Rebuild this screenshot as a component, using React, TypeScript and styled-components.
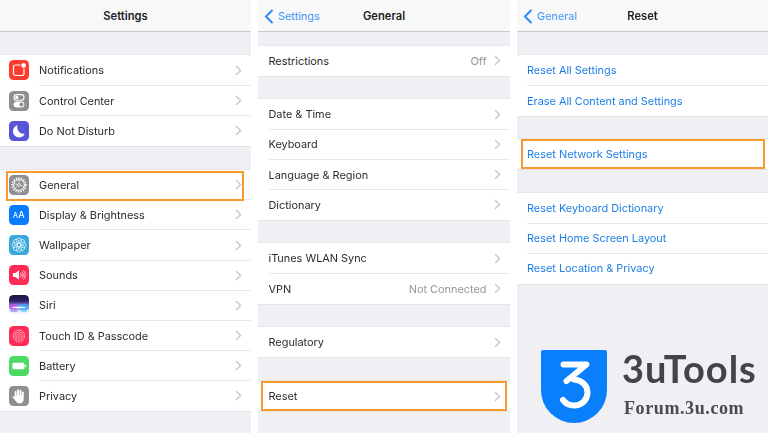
import React from 'react';
import styled, { createGlobalStyle } from 'styled-components';

const GlobalStyle = createGlobalStyle`
  * {
    box-sizing: border-box;
    margin: 0;
    padding: 0;
  }

  html, body {
    width: 768px;
    height: 433px;
    overflow: hidden;
    background: #fff;
  }

  body {
    font-family: 'Inter', 'Liberation Sans', sans-serif;
    -webkit-font-smoothing: antialiased;
  }
`;

const Screens = styled.div`
  display: flex;
  gap: 7px;
  width: 768px;
  height: 433px;
  filter: blur(0.5px);
`;

const Panel = styled.section<{ $width: number }>`
  width: ${(p) => p.$width}px;
  height: 433px;
  display: flex;
  flex-direction: column;
  background: #efeff4;
  overflow: hidden;
`;

const NavBar = styled.header`
  flex: none;
  height: 32px;
  padding-top: 1px;
  display: grid;
  grid-template-columns: 1fr auto 1fr;
  align-items: center;
  background: #f8f8f8;
  border-bottom: 1px solid #c9c9cc;
`;

const NavTitle = styled.h1`
  grid-column: 2;
  font-size: 11.2px;
  font-weight: 600;
  color: #1c1c1e;
`;

const BackLink = styled.div`
  grid-column: 1;
  grid-row: 1;
  display: flex;
  align-items: center;
  gap: 4px;
  padding-left: 6px;
  font-size: 10.9px;
  color: #3f95f8;
`;

const Group = styled.div<{ $top: number }>`
  margin-top: ${(p) => p.$top}px;
  flex: none;
  background: #fff;
  box-shadow: 0 -1px 0 #e6e6ea, 0 1px 0 #e3e3e7;
`;

const Row = styled.div<{ $pad: number; $inset: number }>`
  position: relative;
  height: 30.2px;
  display: flex;
  align-items: center;
  gap: 10px;
  padding: 0 9.5px 0 ${(p) => p.$pad}px;

  & + &::before {
    content: '';
    position: absolute;
    top: -0.5px;
    right: 0;
    left: ${(p) => p.$inset}px;
    border-top: 1px solid #e8e8eb;
  }
`;

const Highlight = styled.span<{ $top: number; $bottom: number; $left: number; $right: number }>`
  position: absolute;
  z-index: 2;
  top: ${(p) => p.$top}px;
  bottom: ${(p) => p.$bottom}px;
  left: ${(p) => p.$left}px;
  right: ${(p) => p.$right}px;
  border: 2px solid #f79a2e;
`;

const RowLabel = styled.span<{ $link?: boolean }>`
  flex: 1;
  font-size: 10.9px;
  white-space: nowrap;
  color: ${(p) => (p.$link ? '#1f7fe6' : '#2b2b2e')};
`;

const RowValue = styled.span`
  font-size: 10.9px;
  color: #96969b;
  margin-right: -3px;
`;

const Tile = styled.span<{ $bg: string }>`
  flex: none;
  width: 20px;
  height: 20px;
  border-radius: 4.5px;
  background: ${(p) => p.$bg};
  display: flex;
  align-items: center;
  justify-content: center;
  color: #fff;
  overflow: hidden;
`;

const TileText = styled.span`
  font-size: 9px;
  font-weight: 500;
  letter-spacing: 0.3px;
  color: #fff;

  small {
    font-size: 7px;
  }
`;

const Brand = styled.div`
  flex: 1;
  display: flex;
  align-items: flex-start;
  gap: 15px;
  padding: 66px 0 0 24px;
`;

const BrandText = styled.div`
  display: flex;
  flex-direction: column;
`;

const BrandName = styled.div`
  font-family: 'Lato', 'Inter', sans-serif;
  font-size: 38px;
  line-height: 37px;
  font-weight: 700;
  letter-spacing: 1px;
  color: #444446;
`;

const BrandSite = styled.div`
  font-family: 'Liberation Serif', serif;
  font-size: 18px;
  line-height: 20px;
  margin-top: 11px;
  padding-left: 2px;
  font-weight: 700;
  letter-spacing: 0.6px;
  color: #4a4a4c;
`;

const Chevron = () => (
  <svg width="7" height="11" viewBox="0 0 7 11" fill="none">
    <path d="M1 1l4.6 4.5L1 10" stroke="#c4c4c8" strokeWidth="1.3" />
  </svg>
);

const BackChevron = () => (
  <svg width="10" height="15" viewBox="0 0 10 15" fill="none">
    <path d="M8.5 1L2 7.5 8.5 14" stroke="#2f8cf7" strokeWidth="2" />
  </svg>
);

const Glyph: React.FC<{ children: React.ReactNode }> = ({ children }) => (
  <svg width="20" height="20" viewBox="0 0 20 20" fill="none">
    {children}
  </svg>
);

const petals = [0, 45, 90, 135];

const icons: Record<string, React.ReactNode> = {
  Notifications: (
    <Tile $bg="#ff3b30">
      <Glyph>
        <rect x="4.5" y="5" width="10.5" height="10.5" rx="2" stroke="#fff" strokeWidth="1.2" />
        <circle cx="14.6" cy="5.4" r="3.2" fill="#ff3b30" />
        <circle cx="14.6" cy="5.4" r="2.3" fill="#fff" />
      </Glyph>
    </Tile>
  ),
  'Control Center': (
    <Tile $bg="#8e8e93">
      <Glyph>
        <rect x="5" y="3.6" width="10" height="5.6" rx="2.8" stroke="#fff" strokeWidth="1.1" />
        <circle cx="7.8" cy="6.4" r="1.7" fill="#fff" />
        <rect x="4.6" y="10.6" width="10.8" height="6" rx="3" fill="#fff" />
        <circle cx="12.4" cy="13.6" r="2" fill="#8e8e93" />
      </Glyph>
    </Tile>
  ),
  'Do Not Disturb': (
    <Tile $bg="#5856d6">
      <Glyph>
        <path d="M8.6 4.2a6.2 6.2 0 1 0 7.2 8.6A6.6 6.6 0 0 1 8.6 4.2z" fill="#fff" />
      </Glyph>
    </Tile>
  ),
  General: (
    <Tile $bg="#8e8e93">
      <Glyph>
        <circle cx="10" cy="10" r="6.8" stroke="#fff" strokeWidth="1.8" strokeDasharray="1.3 1.3" />
        <circle cx="10" cy="10" r="5.4" stroke="#fff" strokeWidth="1" />
        <circle cx="10" cy="10" r="1.4" stroke="#fff" strokeWidth="0.7" />
        <path d="M10 5v3.6M11.3 10.4l4 1.6M8.9 10.8l-3 2.8M5.4 8.6l3.3 1" stroke="#fff" strokeWidth="0.6" />
      </Glyph>
    </Tile>
  ),
  'Display & Brightness': (
    <Tile $bg="#0a7bff">
      <TileText>
        <small>A</small>A
      </TileText>
    </Tile>
  ),
  Wallpaper: (
    <Tile $bg="#38a8dd">
      <Glyph>
        {petals.map((a) => (
          <g key={a} transform={`rotate(${a} 10 10)`} stroke="#fff" strokeWidth="0.7" opacity="0.9">
            <circle cx="10" cy="5.8" r="2.7" />
            <circle cx="10" cy="14.2" r="2.7" />
          </g>
        ))}
      </Glyph>
    </Tile>
  ),
  Sounds: (
    <Tile $bg="#ff2d55">
      <Glyph>
        <path d="M4 8h2.6L10 5.2v9.6L6.6 12H4z" fill="#fff" />
        <path
          d="M11.4 8.2a2.6 2.6 0 0 1 0 3.6M12.9 6.8a4.6 4.6 0 0 1 0 6.4M14.4 5.4a6.6 6.6 0 0 1 0 9.2"
          stroke="#fff"
          strokeWidth="0.8"
        />
      </Glyph>
    </Tile>
  ),
  Siri: (
    <Tile $bg="linear-gradient(180deg, #1b1740 0%, #2c2168 30%, #8a6fd8 50%, #dfe6ff 78%, #fff 100%)">
      <Glyph>
        <ellipse cx="6.5" cy="12" rx="6.5" ry="3" fill="#c05ae0" opacity="0.8" />
        <ellipse cx="14" cy="12" rx="6.5" ry="3.2" fill="#3ea4f5" opacity="0.85" />
        <ellipse cx="10" cy="12.4" rx="6.5" ry="1" fill="#fff" opacity="0.9" />
        <ellipse cx="5" cy="15.4" rx="4" ry="1.6" fill="#9b8cf2" opacity="0.7" />
        <ellipse cx="15" cy="15.6" rx="3.6" ry="1.4" fill="#63c4f7" opacity="0.7" />
      </Glyph>
    </Tile>
  ),
  'Touch ID & Passcode': (
    <Tile $bg="#ff2d55">
      <Glyph>
        <g stroke="#ffb3c2" strokeWidth="0.8" strokeLinecap="round">
          <path d="M4.4 12V9.6a5.6 5.6 0 0 1 11.2 0V12" />
          <path d="M6 14.6V9.8a4 4 0 0 1 8 0v5" />
          <path d="M7.8 16V9.9a2.2 2.2 0 0 1 4.4 0V16" />
          <path d="M10 16.6V9.6" />
        </g>
      </Glyph>
    </Tile>
  ),
  Battery: (
    <Tile $bg="#4cd964">
      <Glyph>
        <rect x="3.4" y="6.8" width="12" height="6.4" rx="1.2" fill="#fff" />
        <rect x="16" y="8.8" width="1" height="2.4" rx="0.4" fill="#fff" />
      </Glyph>
    </Tile>
  ),
  Privacy: (
    <Tile $bg="#8e8e93">
      <Glyph>
        <path
          d="M6.6 10V6M9 9.4V4.2M11.4 9.4V4.8M13.8 10V6.4"
          stroke="#fff"
          strokeWidth="1.9"
          strokeLinecap="round"
        />
        <path
          d="M5.7 9.4h9v4.2c0 2.4-1.7 3.8-3.9 3.8-1.8 0-2.9-.8-3.8-2.2L3.8 11.6c-.6-.9.6-1.8 1.4-1L5.7 11.400z"
          fill="#fff"
        />
      </Glyph>
    </Tile>
  ),
};

const ShieldLogo = () => (
  <svg width="66" height="73" viewBox="0 0 66 73" fill="none" style={{ flex: 'none' }}>
    <path d="M2 0h62a2 2 0 0 1 2 2v38a33 33 0 0 1-66 0V2a2 2 0 0 1 2-2z" fill="#0a7ffb" />
    <path
      d="M22.5 14.500H45.500L25.500 31M33 29.500C41 30 46.500 35.500 46.500 42.500C46.500 50 40.500 55.500 33 55.500C28.500 55.500 24.500 53.500 22 50"
      stroke="#fff"
      strokeWidth="6"
      strokeLinecap="round"
      strokeLinejoin="round"
    />
  </svg>
);

type Item = { label: string; value?: string; marked?: boolean };
type Section = { top: number; items: Item[] };

const mainMenu: Section[] = [
  { top: 23.4, items: [{ label: 'Notifications' }, { label: 'Control Center' }, { label: 'Do Not Disturb' }] },
  {
    top: 23.6,
    items: [
      { label: 'General', marked: true },
      { label: 'Display & Brightness' },
      { label: 'Wallpaper' },
      { label: 'Sounds' },
      { label: 'Siri' },
      { label: 'Touch ID & Passcode' },
      { label: 'Battery' },
      { label: 'Privacy' },
    ],
  },
];

const generalMenu: Section[] = [
  { top: 13.6, items: [{ label: 'Restrictions', value: 'Off' }] },
  {
    top: 23.4,
    items: [{ label: 'Date & Time' }, { label: 'Keyboard' }, { label: 'Language & Region' }, { label: 'Dictionary' }],
  },
  { top: 23.4, items: [{ label: 'iTunes WLAN Sync' }, { label: 'VPN', value: 'Not Connected' }] },
  { top: 23.6, items: [{ label: 'Regulatory' }] },
  { top: 23.8, items: [{ label: 'Reset', marked: true }] },
];

const resetMenu: Section[] = [
  { top: 23.4, items: [{ label: 'Reset All Settings' }, { label: 'Erase All Content and Settings' }] },
  { top: 23.4, items: [{ label: 'Reset Network Settings', marked: true }] },
  {
    top: 23.6,
    items: [{ label: 'Reset Keyboard Dictionary' }, { label: 'Reset Home Screen Layout' }, { label: 'Reset Location & Privacy' }],
  },
];

const App: React.FC = () => {
  return (
    <>
      <GlobalStyle />
      <Screens>
        <Panel $width={251}>
          <NavBar>
            <NavTitle>Settings</NavTitle>
          </NavBar>
          {mainMenu.map((section) => (
            <Group $top={section.top} key={section.items[0].label}>
              {section.items.map((item) => (
                <Row $pad={9} $inset={39} key={item.label}>
                  {icons[item.label]}
                  <RowLabel>{item.label}</RowLabel>
                  <Chevron />
                  {item.marked && <Highlight $top={1.7} $bottom={-1} $left={6} $right={7} />}
                </Row>
              ))}
            </Group>
          ))}
        </Panel>

        <Panel $width={252}>
          <NavBar>
            <BackLink>
              <BackChevron />
              Settings
            </BackLink>
            <NavTitle>General</NavTitle>
          </NavBar>
          {generalMenu.map((section) => (
            <Group $top={section.top} key={section.items[0].label}>
              {section.items.map((item) => (
                <Row $pad={10.5} $inset={10.5} key={item.label}>
                  <RowLabel>{item.label}</RowLabel>
                  {item.value && <RowValue>{item.value}</RowValue>}
                  <Chevron />
                  {item.marked && <Highlight $top={0} $bottom={0} $left={3} $right={3} />}
                </Row>
              ))}
            </Group>
          ))}
        </Panel>

        <Panel $width={251}>
          <NavBar>
            <BackLink>
              <BackChevron />
              General
            </BackLink>
            <NavTitle>Reset</NavTitle>
          </NavBar>
          {resetMenu.map((section) => (
            <Group $top={section.top} key={section.items[0].label}>
              {section.items.map((item) => (
                <Row $pad={10} $inset={10} key={item.label}>
                  <RowLabel $link>{item.label}</RowLabel>
                  {item.marked && <Highlight $top={0} $bottom={0} $left={4} $right={3} />}
                </Row>
              ))}
            </Group>
          ))}
          <Brand>
            <ShieldLogo />
            <BrandText>
              <BrandName>3uTools</BrandName>
              <BrandSite>Forum.3u.com</BrandSite>
            </BrandText>
          </Brand>
        </Panel>
      </Screens>
    </>
  );
};

export default App;
